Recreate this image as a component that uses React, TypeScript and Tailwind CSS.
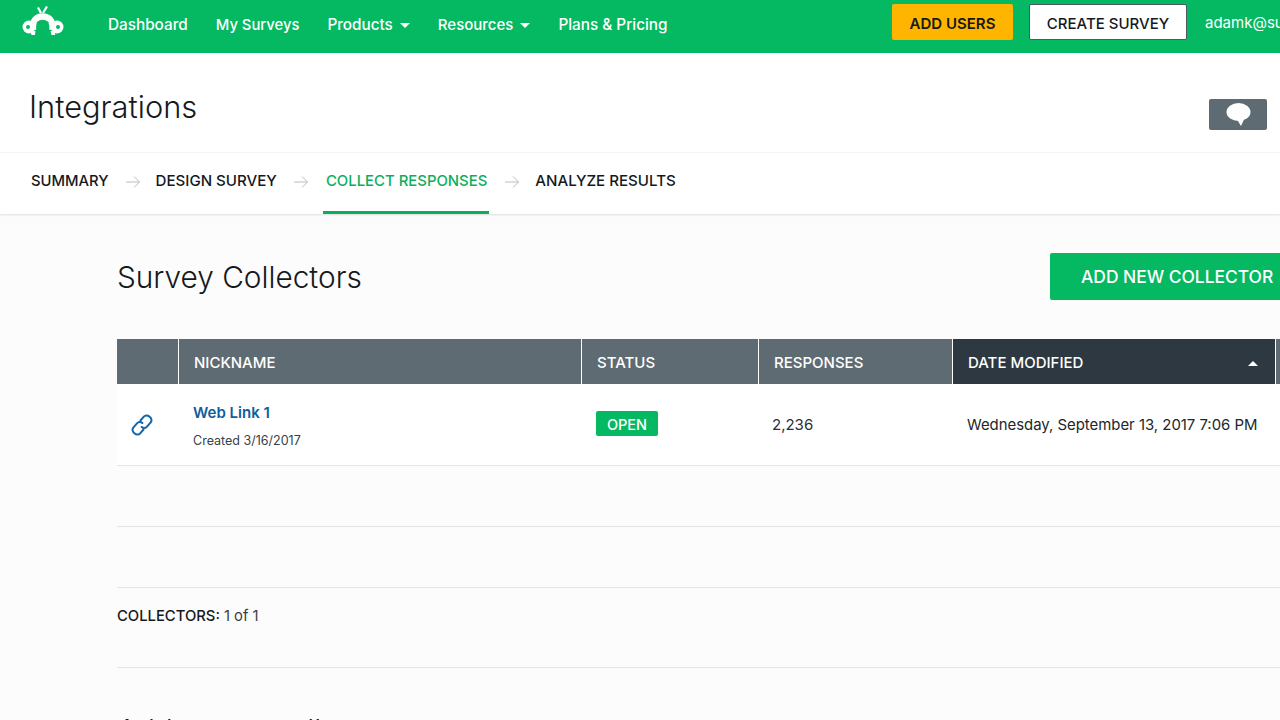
const font = { fontFamily: '"Inter", "Liberation Sans", sans-serif' };

function Logo() {
  return (
    <svg width="44" height="30" viewBox="0 0 44 30" className="block">
      <path d="M17 1.500 20 7M26 0.500 22 7" stroke="#fff" strokeWidth="2.200" fill="none" />
      <path d="M12 24C11 15 15 10.500 21.500 10.500 28 10.500 32.500 15 31.500 24" stroke="#fff" strokeWidth="6.500" fill="none" />
      <path d="M15.500 17C17 14.500 19.500 14.500 21.500 16.500 23.500 14.500 26.500 14.500 28 17L21.500 18Z" fill="#05b862" />
      <circle cx="8" cy="21" r="6.500" fill="#fff" />
      <circle cx="36" cy="21" r="6.500" fill="#fff" />
      <circle cx="7" cy="21" r="2" fill="#05b862" />
      <circle cx="37" cy="21" r="2" fill="#05b862" />
      <path d="M9.500 25h5l-.5 4h-3.500ZM29.500 25h5l-.5 4h-3.500Z" fill="#fff" />
    </svg>
  );
}

function Caret() {
  return <span className="ml-[7px] inline-block h-0 w-0 border-x-[5px] border-t-[5px] border-x-transparent border-t-white" />;
}

function Arrow() {
  return (
    <svg width="16" height="14" viewBox="0 0 16 14" fill="none" stroke="#b9bfc2" strokeWidth="1" className="shrink-0">
      <path d="M1 7h13.500M9 1.500 14.500 7 9 12.500" />
    </svg>
  );
}

export default function App() {
  return (
    <div style={font} className="h-[720px] w-[1280px] overflow-hidden bg-[#fcfcfd] text-[#15191c]">
      <header className="flex h-[53px] items-center bg-[#05b862] text-white">
        <div className="mb-[11px] ml-[21px] w-[44px]"><Logo /></div>
        <nav className="mb-[2px] ml-[43px] flex items-center gap-[28px] text-[15.300px] font-medium">
          <span>Dashboard</span>
          <span className="text-[14.800px]">My Surveys</span>
          <span className="flex items-center">Products<Caret /></span>
          <span className="flex items-center text-[15px]">Resources<Caret /></span>
          <span>Plans &amp; Pricing</span>
        </nav>
        <div className="mb-[9px] ml-auto flex items-center">
          <button className="flex h-[36px] w-[121px] items-center justify-center rounded-[2px] bg-[#ffb500] pt-[5px] text-[15px] font-semibold text-[#16191c]">ADD USERS</button>
          <button className="ml-[16px] flex h-[36px] w-[158px] items-center justify-center rounded-[2px] border border-[#4a5a60] bg-white pt-[5px] text-[15px] font-medium text-[#16191c]">CREATE SURVEY</button>
          <span className="mt-[2px] ml-[18px] w-[75px] overflow-hidden text-[15px] whitespace-nowrap">adamk@surveymonkey.com</span>
        </div>
      </header>

      <section className="flex h-[99px] items-center justify-between bg-white pr-[13px] pl-[29px]">
        <h1 className="mt-[10px] text-[30.800px] leading-none font-light">Integrations</h1>
        <button className="mt-[23px] flex h-[31px] w-[58px] items-center justify-center rounded-[2px] bg-[#5f6b72]">
          <svg width="25" height="23" viewBox="0 0 24 23" fill="#fff">
            <ellipse cx="12" cy="9" rx="12" ry="9" />
            <path d="M10.500 16.500 14.500 23 18 15.500Z" />
          </svg>
        </button>
      </section>

      <nav className="flex h-[62px] items-stretch border-t border-[#f3f4f5] bg-white pl-[31px] text-[15.100px] font-medium shadow-[0_1px_2px_rgba(0,0,0,0.12)]">
        <span className="flex items-center pb-[4px] text-[14.800px]">SUMMARY</span>
        <span className="mr-[15px] ml-[16px] flex items-center pb-[4px]"><Arrow /></span>
        <span className="flex items-center pb-[4px]">DESIGN SURVEY</span>
        <span className="mr-[14px] ml-[16px] flex items-center pb-[4px]"><Arrow /></span>
        <span className="flex items-center border-b-[3px] border-[#0cae5e] pr-[2px] pb-[1px] pl-[3px] text-[14.900px] text-[#0cae5e]">COLLECT RESPONSES</span>
        <span className="mr-[15px] ml-[15px] flex items-center pb-[4px]"><Arrow /></span>
        <span className="flex items-center pb-[4px]">ANALYZE RESULTS</span>
      </nav>

      <main className="ml-[117px] w-[1240px]">
        <div className="flex h-[125px] items-center justify-between">
          <h2 className="mt-[2px] text-[29.800px] leading-none font-light">Survey Collectors</h2>
          <button className="mr-[7px] flex h-[47px] w-[300px] items-center rounded-[2px] bg-[#05b862] pt-[2px] pl-[31px] text-[17.400px] font-medium whitespace-nowrap text-white">ADD NEW COLLECTOR</button>
        </div>

        <div className="flex h-[45px] text-[15px] font-medium text-white">
          <div className="w-[61px] bg-[#5f6b72]" />
          <div className="flex w-[403px] items-center border-l border-white bg-[#5f6b72] pt-[3px] pl-[15px]">NICKNAME</div>
          <div className="flex w-[177px] items-center border-l border-white bg-[#5f6b72] pt-[3px] pl-[15px]">STATUS</div>
          <div className="flex w-[194px] items-center border-l border-white bg-[#5f6b72] pt-[3px] pl-[15px]">RESPONSES</div>
          <div className="flex w-[323px] items-center justify-between border-l border-white bg-[#2d3841] pt-[3px] pr-[17px] pl-[15px]">
            <span>DATE MODIFIED</span>
            <span className="h-0 w-0 border-x-[5px] border-b-[5px] border-x-transparent border-b-white" />
          </div>
          <div className="flex-1 border-l border-white bg-[#5f6b72]" />
        </div>

        <div className="flex h-[82px] items-center border-b border-[#e4e5e6] bg-white pt-[2px]">
          <div className="mb-[2px] w-[61px] pl-[13px]">
            <svg width="24" height="24" viewBox="0 0 24 24" fill="none" stroke="#1466a8" strokeWidth="2" strokeLinecap="round">
              <path d="M10.500 7.500l3.300-3.800a3.800 3.800 0 0 1 5.400-.3l1 .9a3.800 3.800 0 0 1 .3 5.400l-3.500 4a3.800 3.800 0 0 1-5.400.3" />
              <path d="M13.500 16.500l-3.300 3.800a3.800 3.800 0 0 1-5.400.3l-1-.9a3.800 3.800 0 0 1-.3-5.400l3.500-4a3.800 3.800 0 0 1 5.400-.3" />
            </svg>
          </div>
          <div className="mt-[2px] w-[403px] pl-[15px]">
            <div className="text-[15px] leading-none font-semibold text-[#0e5e9e]">Web Link 1</div>
            <div className="mt-[15px] text-[12.500px] leading-none text-[#3a4045]">Created 3/16/2017</div>
          </div>
          <div className="mb-[4px] w-[177px] pl-[15px]">
            <span className="inline-flex h-[25px] w-[62px] items-center justify-center rounded-[2px] bg-[#05b862] pt-[2px] text-[14.500px] font-medium text-white">OPEN</span>
          </div>
          <div className="w-[194px] pl-[14px] text-[15px] text-[#2a3035]">2,236</div>
          <div className="pl-[15px] text-[14.900px] whitespace-nowrap text-[#22272b]">Wednesday, September 13, 2017 7:06 PM</div>
        </div>
        <div className="h-[61px] border-b border-[#e4e5e6]" />
        <div className="h-[61px] border-b border-[#e4e5e6]" />

        <div className="flex h-[80px] items-start border-b border-[#e4e5e6] pt-[19px] text-[14.800px] leading-[18px]">
          <span className="font-medium">COLLECTORS:</span>
          <span className="ml-[4px] text-[#3a4045]">1 of 1</span>
        </div>
        <h2 className="mt-[48px] text-[29.800px] leading-none font-light">Add a new collector</h2>
      </main>
    </div>
  );
}
